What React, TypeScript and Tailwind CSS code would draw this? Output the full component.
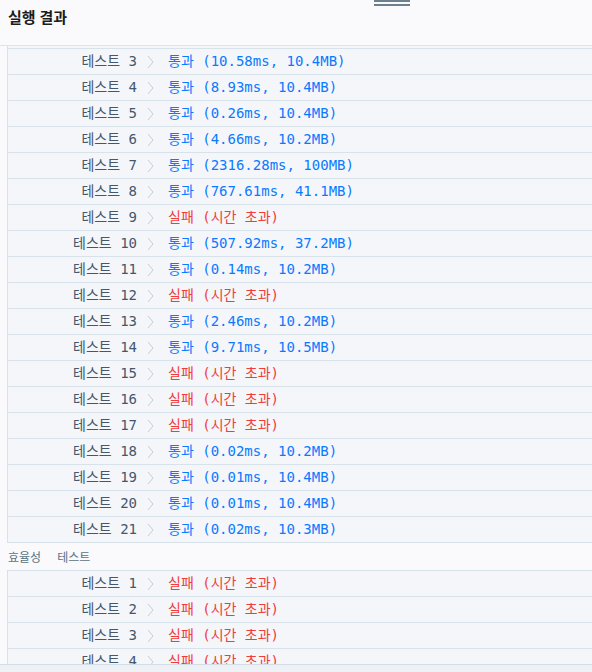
import React from "react";

type Row = { n: number; ok: boolean; detail: string };

const accuracy: Row[] = [
  { n: 3, ok: true, detail: "(10.58ms, 10.4MB)" },
  { n: 4, ok: true, detail: "(8.93ms, 10.4MB)" },
  { n: 5, ok: true, detail: "(0.26ms, 10.4MB)" },
  { n: 6, ok: true, detail: "(4.66ms, 10.2MB)" },
  { n: 7, ok: true, detail: "(2316.28ms, 100MB)" },
  { n: 8, ok: true, detail: "(767.61ms, 41.1MB)" },
  { n: 9, ok: false, detail: "(시간 초과)" },
  { n: 10, ok: true, detail: "(507.92ms, 37.2MB)" },
  { n: 11, ok: true, detail: "(0.14ms, 10.2MB)" },
  { n: 12, ok: false, detail: "(시간 초과)" },
  { n: 13, ok: true, detail: "(2.46ms, 10.2MB)" },
  { n: 14, ok: true, detail: "(9.71ms, 10.5MB)" },
  { n: 15, ok: false, detail: "(시간 초과)" },
  { n: 16, ok: false, detail: "(시간 초과)" },
  { n: 17, ok: false, detail: "(시간 초과)" },
  { n: 18, ok: true, detail: "(0.02ms, 10.2MB)" },
  { n: 19, ok: true, detail: "(0.01ms, 10.4MB)" },
  { n: 20, ok: true, detail: "(0.01ms, 10.4MB)" },
  { n: 21, ok: true, detail: "(0.02ms, 10.3MB)" },
];

const efficiency: Row[] = [1, 2, 3, 4].map((n) => ({ n, ok: false, detail: "(시간 초과)" }));

function ResultRow({ row }: { row: Row }) {
  return (
    <div className="flex items-center h-[26px] border-b border-[#d7e2eb] bg-[#f5f6fa] whitespace-pre">
      <div className="w-[129px] text-right text-[#44576c]">테스트 {row.n}</div>
      <svg className="ml-[10px] w-[7px] h-[14px]" viewBox="0 0 7 14" fill="none">
        <polyline points="1,1 6,7 1,13" stroke="#c5cdd5" strokeWidth="1" />
      </svg>
      <div className={"ml-[14px] " + (row.ok ? "text-[#0a7aff]" : "text-[#ef3d3d]")}>
        {row.ok ? "통과" : "실패"} {row.detail}
      </div>
    </div>
  );
}

export default function App() {
  return (
    <div className="relative w-[592px] h-[672px] overflow-hidden bg-[#fafafc] flex flex-col font-['Noto_Sans','Noto_Sans_CJK_KR',sans-serif]">
      {/* 드래그 핸들 */}
      <div className="absolute top-0 left-[374px] w-[36px] flex flex-col gap-[2px]">
        <div className="h-[2px] bg-[#6e808e]" />
        <div className="h-[2px] bg-[#6e808e]" />
      </div>

      <div className="h-[46px] shrink-0 border-b border-[#dde5ec] px-2 pt-[7px]">
        <h2 className="text-[15px] font-bold text-[#1c1c1c] leading-[20px]">실행 결과</h2>
      </div>

      <div className="flex-1 overflow-hidden font-['DejaVu_Sans_Mono','Noto_Sans_CJK_KR',monospace] text-[14px]">
        <div className="ml-[7px] border-l border-[#d7e2eb]">
          <div className="h-[2px] bg-[#f5f6fa] border-b border-[#d7e2eb] box-content" />
          {accuracy.map((r) => (
            <ResultRow key={r.n} row={r} />
          ))}
        </div>
        <div className="h-[27px] flex items-center px-2 text-[12px] text-[#5a7384] font-['Noto_Sans_CJK_KR',sans-serif]">
          <span>효율성</span>
          <span className="ml-[16px]">테스트</span>
        </div>
        <div className="ml-[7px] border-l border-t border-[#d7e2eb]">
          {efficiency.map((r) => (
            <ResultRow key={r.n} row={r} />
          ))}
        </div>
      </div>

      <div className="absolute left-0 right-0 bottom-0 h-[8px] bg-[#eef1f5] border-t border-[#d3dde5]" />
    </div>
  );
}
